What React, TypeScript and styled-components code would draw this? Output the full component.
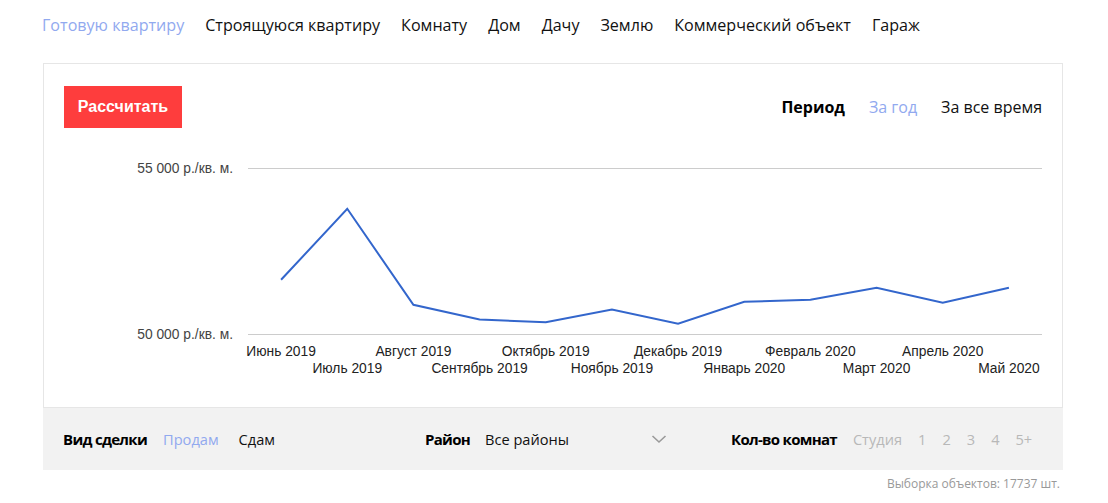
import React from "react";
import styled, { createGlobalStyle } from "styled-components";

const GlobalStyle = createGlobalStyle`
  body {
    margin: 0;
    background: #fff;
    font-family: "Open Sans", sans-serif;
    color: #000;
  }
`;

const Page = styled.div`
  width: 1020px;
  padding: 0 0 0 43px;
`;

const Nav = styled.nav`
  display: flex;
  gap: 21px;
  height: 50px;
  align-items: center;
  margin: 0 0 13px -1px;
  font-size: 16.1px;
`;

const NavItem = styled.span<{ $active?: boolean }>`
  color: ${({ $active }) => ($active ? "#91a9ef" : "#111")};
  white-space: nowrap;
`;

const Card = styled.div`
  border: 1px solid #e6e6e6;
`;

const CardHeader = styled.div`
  display: flex;
  justify-content: space-between;
  align-items: center;
  padding: 22px 20px 0 20px;
  height: 42px;
`;

const CalcButton = styled.button`
  height: 42px;
  width: 118px;
  border: 0;
  background: #fe3d3d;
  color: #fff;
  font-family: "Liberation Sans", Arial, sans-serif;
  font-weight: bold;
  font-size: 16px;
  padding: 0;
`;

const Switcher = styled.div`
  display: flex;
  align-items: center;
  gap: 24px;
  font-size: 16px;
`;

const Label = styled.span`
  font-weight: bold;
  color: #000;
  white-space: nowrap;
`;

const BarLabel = styled(Label)`
  font-size: 15px;
  letter-spacing: -0.7px;
`;

const Option = styled.span<{ $tone?: "active" | "muted" }>`
  white-space: nowrap;
  color: ${({ $tone }) =>
    $tone === "active" ? "#91a9ef" : $tone === "muted" ? "#b8b8b8" : "#111"};
`;

const Chart = styled.svg`
  display: block;
  font-family: "Liberation Sans", Arial, sans-serif;
  font-size: 13.8px;
`;

const FilterBar = styled.div`
  display: grid;
  grid-template-columns: 362px 306px 1fr;
  align-items: center;
  height: 62px;
  background: #f2f2f2;
  padding-left: 20px;
  font-size: 14.6px;
`;

const Group = styled.div<{ $gap?: number }>`
  display: flex;
  align-items: center;
  gap: ${({ $gap }) => $gap ?? 16}px;
`;

const Select = styled.div`
  display: flex;
  align-items: center;
  justify-content: space-between;
  width: 182px;
  color: #111;
`;

const Count = styled.div`
  text-align: right;
  padding-right: 3px;
  margin-top: 5px;
  font-family: "Open Sans", sans-serif;
  font-size: 12px;
  color: #999;
`;

const months = [
  "Июнь 2019",
  "Июль 2019",
  "Август 2019",
  "Сентябрь 2019",
  "Октябрь 2019",
  "Ноябрь 2019",
  "Декабрь 2019",
  "Январь 2020",
  "Февраль 2020",
  "Март 2020",
  "Апрель 2020",
  "Май 2020",
];

const values = [
  51648, 53786, 50895, 50452, 50370, 50753, 50322, 50985, 51045, 51407, 50955,
  51407,
];

const plot = { left: 204, right: 998, top: 40.5, bottom: 206.5 };

const toX = (i: number) => {
  const step = (plot.right - plot.left) / values.length;
  return plot.left + step / 2 + i * step;
};

const toY = (v: number) =>
  plot.bottom - ((v - 50000) / 5000) * (plot.bottom - plot.top);

const PriceChart: React.FC = () => {
  const points = values.map((v, i) => `${toX(i)},${toY(v)}`).join(" ");
  return (
    <Chart width={1018} height={279}>
      <line x1={plot.left} x2={plot.right} y1={plot.top} y2={plot.top} stroke="#cccccc" />
      <line x1={plot.left} x2={plot.right} y1={plot.bottom} y2={plot.bottom} stroke="#cccccc" />
      <text x={189} y={plot.top + 4.5} textAnchor="end" fill="#444">
        55 000 р./кв. м.
      </text>
      <text x={189} y={plot.bottom + 4.5} textAnchor="end" fill="#444">
        50 000 р./кв. м.
      </text>
      <polyline points={points} fill="none" stroke="#3366cc" strokeWidth={2} />
      {months.map((m, i) => (
        <text
          key={m}
          x={toX(i)}
          y={i % 2 === 0 ? 227.5 : 244.5}
          textAnchor="middle"
          fill="#222"
        >
          {m}
        </text>
      ))}
    </Chart>
  );
};

const Chevron = () => (
  <svg width="16" height="10" viewBox="0 0 16 10">
    <polyline points="1.5,2 8,8 14.5,2" fill="none" stroke="#9a9a9a" strokeWidth="1.6" />
  </svg>
);

const App: React.FC = () => (
  <Page>
    <GlobalStyle />
    <Nav>
      <NavItem $active>Готовую квартиру</NavItem>
      <NavItem>Строящуюся квартиру</NavItem>
      <NavItem>Комнату</NavItem>
      <NavItem>Дом</NavItem>
      <NavItem>Дачу</NavItem>
      <NavItem>Землю</NavItem>
      <NavItem>Коммерческий объект</NavItem>
      <NavItem>Гараж</NavItem>
    </Nav>
    <Card>
      <CardHeader>
        <CalcButton>Рассчитать</CalcButton>
        <Switcher>
          <Label>Период</Label>
          <Option $tone="active">За год</Option>
          <Option>За все время</Option>
        </Switcher>
      </CardHeader>
      <PriceChart />
    </Card>
    <FilterBar>
      <Group>
        <BarLabel>Вид сделки</BarLabel>
        <Option $tone="active">Продам</Option>
        <Option style={{ marginLeft: 4 }}>Сдам</Option>
      </Group>
      <Group $gap={15}>
        <BarLabel>Район</BarLabel>
        <Select>
          Все районы
          <Chevron />
        </Select>
      </Group>
      <Group $gap={16}>
        <BarLabel>Кол-во комнат</BarLabel>
        <Option $tone="muted">Студия</Option>
        <Option $tone="muted">1</Option>
        <Option $tone="muted">2</Option>
        <Option $tone="muted">3</Option>
        <Option $tone="muted">4</Option>
        <Option $tone="muted">5+</Option>
      </Group>
    </FilterBar>
    <Count>Выборка объектов: 17737 шт.</Count>
  </Page>
);

export default App;
